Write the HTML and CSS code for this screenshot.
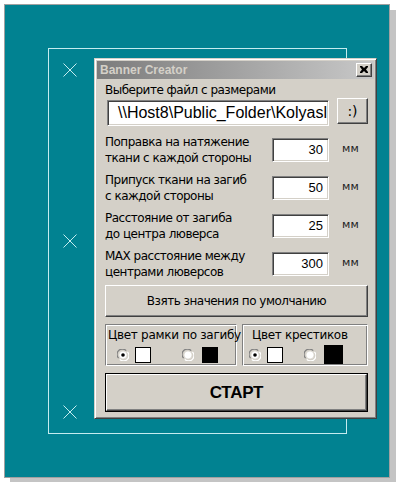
FILE: index.html
```html
<!DOCTYPE html>
<html lang="ru">
<head>
<meta charset="utf-8">
<title>Banner Creator</title>
<link rel="stylesheet" href="styles.css">
</head>
<body>
<div class="page">
  <div class="canvas">
    <div class="frame"></div>
    <svg class="cross c1" width="14" height="14" viewBox="0 0 14 14"><path d="M0.5 0.5 L13.5 13.5 M13.5 0.5 L0.5 13.5"/></svg>
    <svg class="cross c2" width="14" height="14" viewBox="0 0 14 14"><path d="M0.5 0.5 L13.5 13.5 M13.5 0.5 L0.5 13.5"/></svg>
    <svg class="cross c3" width="14" height="14" viewBox="0 0 14 14"><path d="M0.5 0.5 L13.5 13.5 M13.5 0.5 L0.5 13.5"/></svg>

    <div class="dialog">
      <div class="titlebar">
        <span class="title">Banner Creator</span>
        <span class="close"><svg width="8" height="7" viewBox="0 0 8 7"><path d="M0 0h2l2 2 2-2h2v1L6 3.5 8 6v1H6L4 5 2 7H0V6l2-2.5L0 1z"/></svg></span>
      </div>
      <div class="body">
        <div class="file-label">Выберите файл с размерами</div>
        <div class="file-row">
          <div class="field path"><span>\\Host8\Public_Folder\Kolyasl</span></div>
          <div class="btn smile">:)</div>
        </div>
        <div class="params">
          <div class="param">
            <div class="plabel">Поправка на натяжение<br>ткани с каждой стороны</div>
            <div class="field num">30</div>
            <div class="unit">мм</div>
          </div>
          <div class="param">
            <div class="plabel">Припуск ткани на загиб<br>с каждой стороны</div>
            <div class="field num">50</div>
            <div class="unit">мм</div>
          </div>
          <div class="param">
            <div class="plabel">Расстояние от загиба<br>до центра люверса</div>
            <div class="field num">25</div>
            <div class="unit">мм</div>
          </div>
          <div class="param">
            <div class="plabel">MAX расстояние между<br>центрами люверсов</div>
            <div class="field num">300</div>
            <div class="unit">мм</div>
          </div>
        </div>
        <div class="btn defaults">Взять значения по умолчанию</div>
        <div class="groups">
          <div class="group g-left">
            <div class="glabel">Цвет рамки по загибу</div>
            <div class="opts">
              <svg class="radio" width="12" height="12" viewBox="0 0 12 12"><path class="r-dk" d="M1.6 9.2 A5.2 5.2 0 0 1 9.2 1.6"/><path class="r-lt" d="M2.8 10.4 A5.2 5.2 0 0 0 10.4 2.8"/><circle class="r-in" cx="6" cy="6" r="4"/><circle class="r-dot" cx="6" cy="6" r="1.8"/></svg>
              <span class="swatch white"></span>
              <svg class="radio second" width="12" height="12" viewBox="0 0 12 12"><path class="r-dk" d="M1.6 9.2 A5.2 5.2 0 0 1 9.2 1.6"/><path class="r-lt" d="M2.8 10.4 A5.2 5.2 0 0 0 10.4 2.8"/><circle class="r-in" cx="6" cy="6" r="4"/></svg>
              <span class="swatch black"></span>
            </div>
          </div>
          <div class="group g-right">
            <div class="glabel">Цвет крестиков</div>
            <div class="opts">
              <svg class="radio" width="12" height="12" viewBox="0 0 12 12"><path class="r-dk" d="M1.6 9.2 A5.2 5.2 0 0 1 9.2 1.6"/><path class="r-lt" d="M2.8 10.4 A5.2 5.2 0 0 0 10.4 2.8"/><circle class="r-in" cx="6" cy="6" r="4"/><circle class="r-dot" cx="6" cy="6" r="1.8"/></svg>
              <span class="swatch white"></span>
              <svg class="radio second" width="12" height="12" viewBox="0 0 12 12"><path class="r-dk" d="M1.6 9.2 A5.2 5.2 0 0 1 9.2 1.6"/><path class="r-lt" d="M2.8 10.4 A5.2 5.2 0 0 0 10.4 2.8"/><circle class="r-in" cx="6" cy="6" r="4"/></svg>
              <span class="swatch black big"></span>
            </div>
          </div>
        </div>
        <div class="start"><div class="btn start-inner">СТАРТ</div></div>
      </div>
    </div>
  </div>
</div>
</body>
</html>
```

FILE: styles.css
```css
* { box-sizing: border-box; }
html, body { margin: 0; padding: 0; background: #ffffff; }
body {
  font-family: "DejaVu Sans", "Liberation Sans", sans-serif;
  font-size: 12px;
  letter-spacing: -0.5px;
  color: #000;
}

.page { padding: 4px; }

.canvas {
  position: relative;
  width: 386px;
  height: 474px;
  background: #018291;
  border: 1px solid #a0a0a0;
  box-shadow: 6px 6px 0 #c4c4c4;
}

.frame {
  position: absolute;
  left: 43px;
  top: 43px;
  width: 299px;
  height: 386px;
  border: 1px solid #c4ecef;
}

.cross { position: absolute; left: 58px; }
.cross path { stroke: #c4ecef; stroke-width: 1; fill: none; }
.c1 { top: 58px; }
.c2 { top: 229px; }
.c3 { top: 400px; }

.dialog {
  position: absolute;
  left: 89px;
  top: 53px;
  width: 283px;
  height: 361px;
  background: #d4d0c8;
  border: 1px solid;
  border-color: #d4d0c8 #404040 #404040 #d4d0c8;
  box-shadow: inset 1px 1px 0 #ffffff, inset -1px -1px 0 #808080;
  padding: 2px;
  display: flex;
  flex-direction: column;
}

.titlebar {
  height: 18px;
  background: linear-gradient(to right, #7c7c7c, #c8c8c8);
  display: flex;
  align-items: center;
  padding: 0 2px 0 3px;
}
.title {
  flex: 1;
  font-family: "Liberation Sans", Arial, sans-serif;
  font-weight: bold;
  font-size: 12px;
  letter-spacing: 0;
  color: #d4d0c8;
}
.close {
  width: 16px;
  height: 14px;
  background: #d4d0c8;
  border: 1px solid;
  border-color: #ffffff #404040 #404040 #ffffff;
  box-shadow: inset -1px -1px 0 #808080;
  display: flex;
  align-items: center;
  justify-content: center;
  padding-bottom: 1px;
}
.close svg path { fill: #000; }

.body {
  padding: 3px 6px 4px 8px;
  display: flex;
  flex-direction: column;
}

.file-label { line-height: 16px; height: 16px; }

.file-row {
  display: flex;
  align-items: flex-start;
  height: 28px;
}

.field {
  background: #ffffff;
  border: 1px solid;
  border-color: #808080 #ffffff #ffffff #808080;
  box-shadow: inset 1px 1px 0 #404040, inset -1px -1px 0 #d4d0c8;
}

.path {
  margin: 2px 0 0 2px;
  width: 222px;
  height: 26px;
  overflow: hidden;
  white-space: nowrap;
  display: flex;
  align-items: center;
  padding-left: 10px;
  font-family: "Liberation Sans", Arial, sans-serif;
  letter-spacing: 0;
  font-size: 16px;
}

.btn {
  background: #d4d0c8;
  border: 1px solid;
  border-color: #ffffff #404040 #404040 #ffffff;
  box-shadow: inset -1px -1px 0 #808080;
  display: flex;
  align-items: center;
  justify-content: center;
}

.smile {
  margin-left: auto;
  width: 31px;
  height: 26px;
  font-size: 14px;
  letter-spacing: 0;
}

.params {
  margin-top: 8px;
  display: flex;
  flex-direction: column;
  gap: 6px;
}

.param {
  display: grid;
  grid-template-columns: 167px 57px 1fr;
  align-items: center;
  height: 32px;
}
.plabel { line-height: 16px; white-space: nowrap; }
.num {
  height: 24px;
  text-align: right;
  padding-right: 5px;
  line-height: 22px;
  font-family: "Liberation Sans", Arial, sans-serif;
  font-size: 13px;
  letter-spacing: 0;
}
.unit {
  padding-left: 13px;
  font-size: 11px;
  letter-spacing: 0.2px;
  color: #222;
  margin-bottom: 3px;
}

.defaults {
  margin-top: 5px;
  height: 32px;
}

.groups {
  margin-top: 7px;
  height: 42px;
  display: flex;
  gap: 5px;
}
.group {
  border: 1px solid;
  border-color: #808080 #ffffff #ffffff #808080;
  box-shadow: inset 1px 1px 0 #ffffff, inset -1px -1px 0 #808080;
}
.g-left { width: 132px; padding: 2px 0 0 2px; }
.g-right { flex: 1; padding: 2px 0 0 9px; }
.glabel { line-height: 16px; white-space: nowrap; font-size: 12px; letter-spacing: -0.3px; }

.opts {
  display: flex;
  align-items: center;
  margin-top: 3px;
  height: 17px;
}
.g-left .opts { padding-left: 9px; }
.g-right .opts { margin-left: -3px; }
.g-left .radio.second { margin-left: 31px; }
.g-right .radio.second { margin-left: 21px; }
.radio { flex: none; }
.r-dk { fill: none; stroke: #808080; stroke-width: 1.2; }
.r-lt { fill: none; stroke: #ffffff; stroke-width: 1.2; }
.r-in { fill: #ffffff; stroke: #d4d0c8; stroke-width: 0.6; }
.r-dot { fill: #000; }

.swatch {
  flex: none;
  display: block;
  width: 16px;
  height: 16px;
  margin-left: 6px;
  border: 1px solid #000;
}
.radio.second + .swatch { margin-left: 8px; }
.swatch.white { background: #fff; }
.swatch.black { background: #000; }
.swatch.big { width: 19px; height: 19px; }

.start {
  margin-top: 7px;
  height: 39px;
  border: 1px solid #000;
  display: flex;
}
.start-inner {
  flex: 1;
  font-family: "Liberation Sans", Arial, sans-serif;
  font-weight: bold;
  font-size: 17px;
  letter-spacing: -0.3px;
}
```
